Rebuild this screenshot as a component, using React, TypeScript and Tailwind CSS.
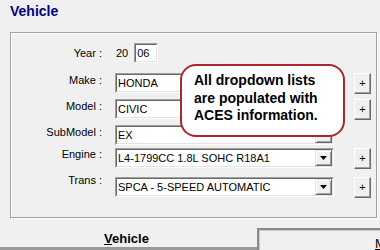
import React from "react";

function Sunken({ className, children }: { className: string; children?: React.ReactNode }) {
  return (
    <div className={"border border-t-[#a0a0a0] border-l-[#a0a0a0] border-b-white border-r-white " + className}>
      <div className="w-full h-full border border-t-[#696969] border-l-[#696969] border-b-[#e3e3e3] border-r-[#e3e3e3] bg-white flex items-stretch">
        {children}
      </div>
    </div>
  );
}

function Arrow() {
  return (
    <div className="w-[17px] h-full bg-[#f0f0f0] border border-t-[#e3e3e3] border-l-[#e3e3e3] border-b-[#696969] border-r-[#696969] shadow-[inset_1px_1px_0_#fff,inset_-1px_-1px_0_#a0a0a0] flex items-center justify-center">
      <svg width="7" height="4" viewBox="0 0 7 4">
        <polygon points="0,0 7,0 3.5,4" fill="#000" />
      </svg>
    </div>
  );
}

function Combo({ value }: { value: string }) {
  return (
    <Sunken className="w-[219px] h-[20px]">
      <div className="flex-1 pl-[1px] text-[11px] leading-[16px] text-black whitespace-nowrap overflow-hidden">{value}</div>
      <Arrow />
    </Sunken>
  );
}

function Plus() {
  return (
    <div className="ml-[20px] w-[17px] h-[21px] bg-[#f0f0f0] border border-t-white border-l-white border-b-[#696969] border-r-[#696969] shadow-[inset_-1px_-1px_0_#a0a0a0] flex items-center justify-center text-[11px] leading-none text-black">
      +
    </div>
  );
}

function Row({
  label,
  labelClass,
  rowClass,
  children,
}: {
  label: string;
  labelClass: string;
  rowClass: string;
  children: React.ReactNode;
}) {
  return (
    <div className={"flex items-start " + rowClass}>
      <div className={"w-[91px] text-right text-[11px] leading-[13px] text-black whitespace-nowrap " + labelClass}>{label}</div>
      <div className="ml-[13px] flex items-start">{children}</div>
    </div>
  );
}

export default function App() {
  return (
    <div className="w-[380px] h-[250px] bg-[#f0f0f0] overflow-hidden font-['Liberation_Sans',Arial,sans-serif]">
      <div className="pl-[10px] pt-[3px] text-[14px] leading-[16px] font-bold text-[#000080]">Vehicle</div>
      <div className="ml-[10px] mt-[13px] w-[367px] h-[186px] border border-[#a0a0a0] shadow-[inset_1px_1px_0_#fff,1px_1px_0_#fff] relative pt-[10px]">
        <Row label="Year :" labelClass="mt-[4px]" rowClass="">
          <div className="ml-[1px] mt-[4px] text-[11px] leading-[13px] text-black">20</div>
          <Sunken className="ml-[6px] w-[24px] h-[20px]">
            <div className="pl-[1px] text-[11px] leading-[16px] text-black">06</div>
          </Sunken>
        </Row>
        <Row label="Make :" labelClass="mt-[1px]" rowClass="mt-[10px]">
          <Combo value="HONDA" />
          <Plus />
        </Row>
        <Row label="Model :" labelClass="mt-[1px]" rowClass="mt-[5px]">
          <Combo value="CIVIC" />
          <Plus />
        </Row>
        <Row label="SubModel :" labelClass="mt-[1px]" rowClass="mt-[5px]">
          <Combo value="EX" />
        </Row>
        <Row label="Engine :" labelClass="mt-0" rowClass="mt-[3px]">
          <Combo value="L4-1799CC 1.8L SOHC R18A1" />
          <Plus />
        </Row>
        <Row label="Trans :" labelClass="-mt-[3px]" rowClass="mt-[8px]">
          <Combo value="SPCA - 5-SPEED AUTOMATIC" />
          <Plus />
        </Row>

        <div className="absolute left-[169px] top-[31px] w-[165px] h-[73px] rounded-[16px] border-2 border-[#a8282e] bg-white pl-[12px] pt-[6px] text-[14px] font-bold leading-[17.5px] text-black">
          All dropdown lists
          <br />
          are populated with
          <br />
          ACES information.
        </div>
      </div>
      <div className="flex h-[32px]">
        <div className="w-[257px] h-[32px] border-b-[3px] border-[#999999] pt-[13px] pr-[4px] flex justify-center">
          <div className="text-[13px] leading-[16px] font-bold text-black">
            <span className="underline">V</span>ehicle
          </div>
        </div>
        <div className="flex-1 mt-[10px] border-t-2 border-l-2 border-[#8a8a8a] shadow-[inset_1px_1px_0_#c8c8c8] pl-[116px] pt-[1px] overflow-hidden whitespace-nowrap">
          <span className="text-[13px] leading-[16px] text-black">
            <span className="underline">M</span>isc
          </span>
        </div>
      </div>
    </div>
  );
}
